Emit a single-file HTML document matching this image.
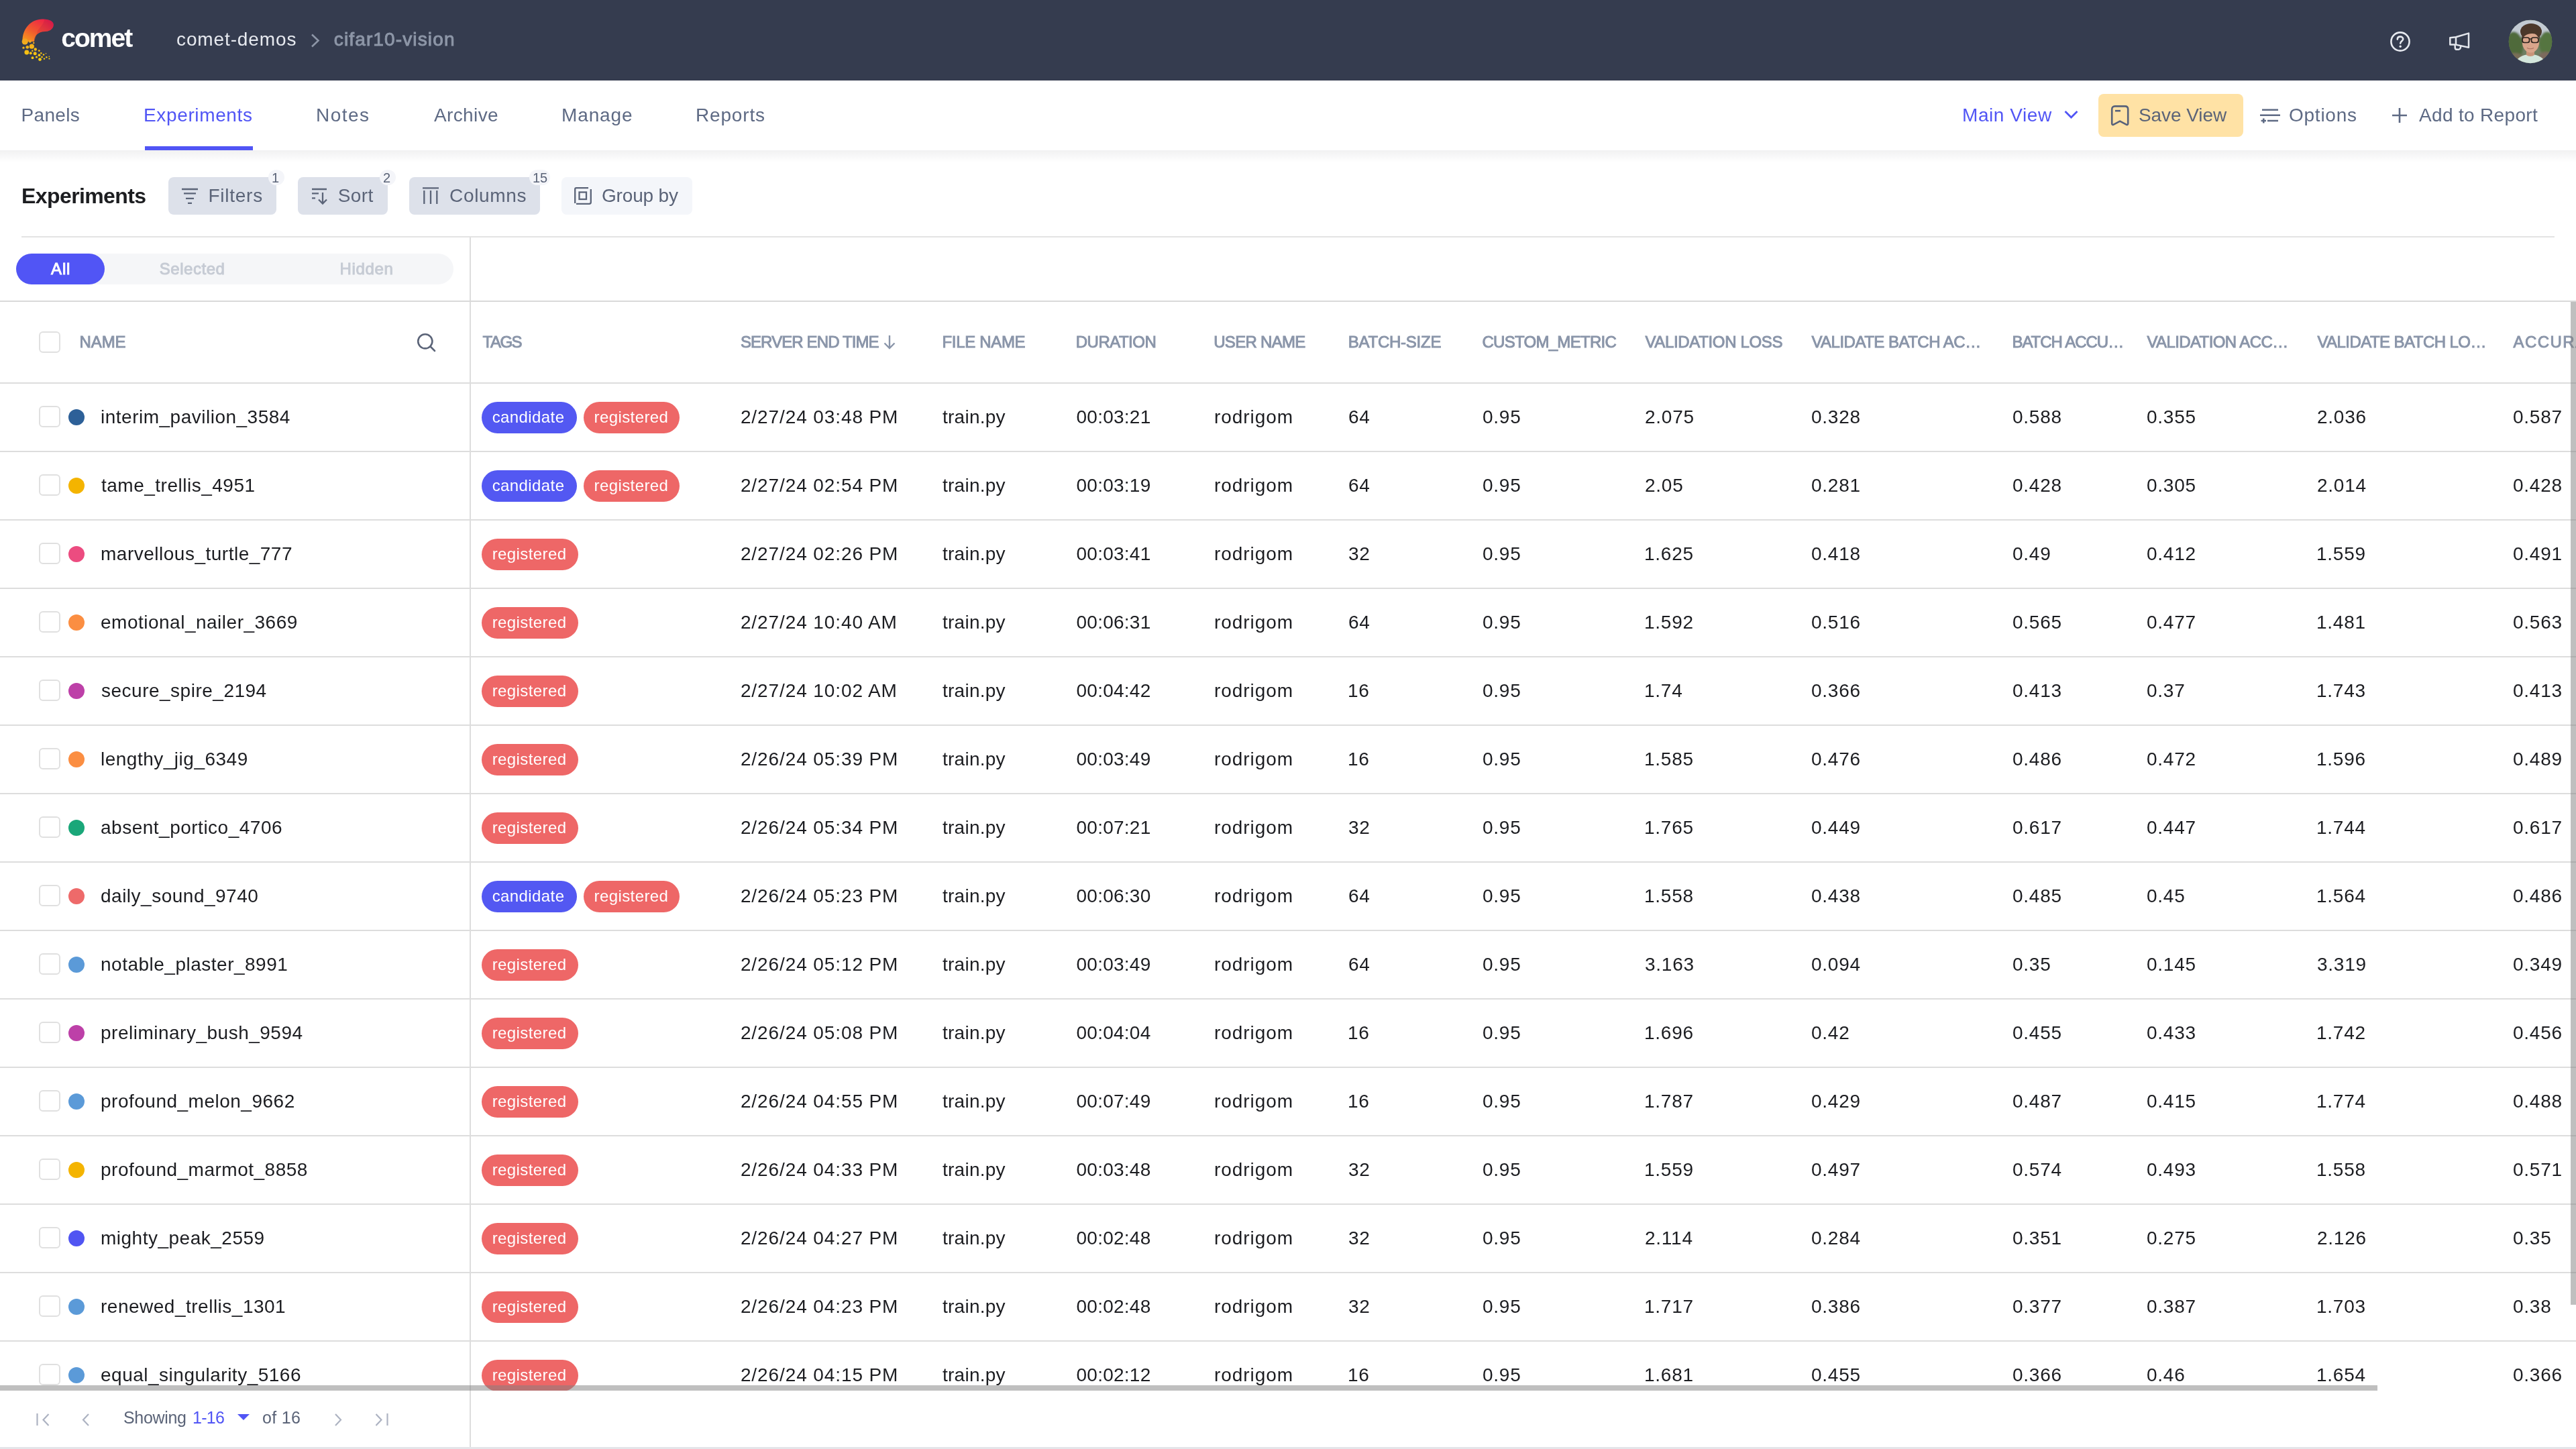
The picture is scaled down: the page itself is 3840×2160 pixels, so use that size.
<!DOCTYPE html>
<html><head><meta charset="utf-8">
<style>
*{margin:0;padding:0;box-sizing:border-box}
html,body{width:3840px;height:2160px;overflow:hidden;background:#fff;font-family:"Liberation Sans",sans-serif}
.t{position:absolute;white-space:pre;line-height:1;font-family:"Liberation Sans",sans-serif}
.a{position:absolute}
#nav{position:absolute;left:0;top:0;width:3840px;height:120px;background:#353c4f}
#tabs{position:absolute;left:0;top:120px;width:3840px;height:104px;background:#fff}
#shadow{position:absolute;left:0;top:224px;width:3840px;height:18px;background:linear-gradient(#f1f1f2,#ffffff)}
.btn{position:absolute;top:264px;height:56px;border-radius:8px;background:#dde1ea}
.badge{position:absolute;top:253px;height:23px;border-radius:12px;background:#f4f5f9}
.cb{position:absolute;width:32px;height:32px;border:2px solid #e0e0e0;border-radius:6px;background:#fff}
.dot{position:absolute;width:24px;height:24px;border-radius:50%}
.tag{position:absolute;height:47px;border-radius:24px}
.tag.c{background:#5358f2}
.tag.r{background:#ee6767}
.hl{position:absolute;left:0;width:3840px;height:2px;background:#dddddd}
svg{position:absolute;overflow:visible}
</style></head><body>
<div id="nav"></div>
<!-- logo -->
<svg style="left:0;top:0" width="220" height="120" viewBox="0 0 220 120">
  <defs>
    <linearGradient id="lg1" x1="0" y1="1" x2="0.8" y2="0">
      <stop offset="0" stop-color="#f7a21b"/><stop offset="0.45" stop-color="#f15a2e"/><stop offset="1" stop-color="#ec1c4a"/>
    </linearGradient>
    <linearGradient id="lgd" gradientUnits="userSpaceOnUse" x1="0" y1="57" x2="0" y2="91">
      <stop offset="0" stop-color="#f0a323"/><stop offset="1" stop-color="#fbd20a"/>
    </linearGradient>
    <linearGradient id="lg2" x1="0" y1="1" x2="1" y2="0">
      <stop offset="0" stop-color="#e94b2f"/><stop offset="1" stop-color="#c0134a"/>
    </linearGradient>
  </defs>
  <path d="M33.5 62 C33 42 47 28 64 28.5 C72 28.8 80 31 79.8 37 C79.6 44 72 47 67 47 C56 47 51 54 51 62 Z" fill="url(#lg1)"/>
  <path d="M51 62 C51 54 56 47 67 47 C72 47 79.6 44 79.8 37 C80 31 72 28.8 64 28.5 C70 30 60 40 56 46 Z" fill="url(#lg2)" opacity="0.55"/>
  <g fill="url(#lgd)">
    <circle cx="37.2" cy="62" r="4.6"/><circle cx="44.8" cy="61.8" r="2"/><circle cx="50.2" cy="64" r="1.3"/>
    <circle cx="47.3" cy="69.2" r="3.6"/><circle cx="40.8" cy="70.3" r="2.4"/><circle cx="35" cy="71.2" r="1.6"/>
    <circle cx="52.8" cy="73.5" r="2.2"/><circle cx="48.3" cy="75.8" r="1.2"/><circle cx="39.8" cy="78" r="3.4"/>
    <circle cx="45.7" cy="79.2" r="2"/><circle cx="52.2" cy="79.8" r="2.5"/><circle cx="58.3" cy="75.6" r="1.4"/>
    <circle cx="61.3" cy="79.3" r="1.2"/><circle cx="58.5" cy="82.2" r="1.9"/><circle cx="65" cy="81.5" r="1.3"/>
    <circle cx="68.5" cy="79.8" r="0.8"/><circle cx="48.5" cy="86.2" r="1.9"/><circle cx="54.5" cy="85" r="1.6"/>
    <circle cx="62.5" cy="85" r="1.3"/><circle cx="59.5" cy="88.6" r="2.4"/><circle cx="66" cy="87.6" r="1.2"/>
    <circle cx="69.3" cy="85.3" r="1.2"/><circle cx="73.3" cy="84.4" r="0.8"/><circle cx="73.5" cy="87.5" r="1.1"/>
  </g>
</svg>
<!-- breadcrumb chevron -->
<svg style="left:462px;top:50px" width="16" height="22" viewBox="0 0 16 22"><path d="M3 1.5 L12.5 10.5 L3 19.5" fill="none" stroke="#8d96a7" stroke-width="2.6"/></svg>
<!-- help icon -->
<svg style="left:3562px;top:46px" width="32" height="32" viewBox="0 0 32 32">
  <circle cx="16" cy="16" r="13.6" fill="none" stroke="#e6e9ef" stroke-width="2.6"/>
  <path d="M11.8 12.6 C11.8 10 13.6 8.6 16 8.6 C18.5 8.6 20.2 10.2 20.2 12.3 C20.2 15.2 16.2 15.4 16.2 18.6" fill="none" stroke="#e6e9ef" stroke-width="2.6" stroke-linecap="round"/>
  <circle cx="16.2" cy="23.2" r="1.7" fill="#e6e9ef"/>
</svg>
<!-- megaphone -->
<svg style="left:3650px;top:47px" width="34" height="30" viewBox="0 0 34 30">
  <path d="M2.3 9.2 L11 8.2 L30 2.6 L30 23.8 L11 19.6 L2.3 19.4 Z" fill="none" stroke="#e3e6ec" stroke-width="2.5" stroke-linejoin="round"/>
  <path d="M11 8.4 L11 19.4" stroke="#e3e6ec" stroke-width="2.5"/>
  <path d="M9.6 20.2 L9.8 24.6 C9.9 26.2 11 26.8 12.6 26.8 L15.2 26.8 C16.4 26.8 17 26.2 17.6 24.8 L18.4 21.6" fill="none" stroke="#e3e6ec" stroke-width="2.5" stroke-linejoin="round" stroke-linecap="round"/>
</svg>
<!-- avatar -->
<svg style="left:3739px;top:29px" width="66" height="66" viewBox="0 0 66 66">
  <defs><clipPath id="av"><circle cx="33" cy="33" r="32.3"/></clipPath>
  <filter id="bl" x="-20%" y="-20%" width="140%" height="140%"><feGaussianBlur stdDeviation="1.6"/></filter>
  <filter id="bl2"><feGaussianBlur stdDeviation="0.6"/></filter></defs>
  <g clip-path="url(#av)">
    <rect width="66" height="66" fill="#6f7f63"/>
    <g filter="url(#bl)">
      <rect x="0" y="0" width="66" height="26" fill="#c3cbd3"/>
      <ellipse cx="8" cy="40" rx="14" ry="22" fill="#4f6a3b"/>
      <ellipse cx="58" cy="36" rx="12" ry="18" fill="#557441"/>
      <ellipse cx="10" cy="60" rx="14" ry="10" fill="#7a6e58"/>
      <ellipse cx="56" cy="58" rx="12" ry="10" fill="#7c6a5d"/>
    </g>
    <g filter="url(#bl2)">
    <path d="M10 68 C12 57 21 52 33 52 C45 52 54 57 56 68 Z" fill="#d4e6dc"/>
    <path d="M27 44 L27 53 C30 55.5 36 55.5 39 53 L39 44 Z" fill="#c99479"/>
    <ellipse cx="34" cy="18" rx="16" ry="12" fill="#4b372a"/>
    <ellipse cx="33.5" cy="34" rx="12.6" ry="15.5" fill="#d9a58b"/>
    <path d="M20.5 30 C19.5 20 24 13 32 12.5 C40 12 46 16 47 24 L46.8 30 C45 24 41 20.5 35 21 C28 21.5 23 24 20.5 30 Z" fill="#4b372a"/>
    <rect x="21" y="27" width="10.5" height="7.5" rx="3" fill="none" stroke="#2a221e" stroke-width="1.7"/>
    <rect x="34.5" y="27" width="10.5" height="7.5" rx="3" fill="none" stroke="#2a221e" stroke-width="1.7"/>
    <path d="M31.5 29 L34.5 29" stroke="#2a221e" stroke-width="1.3"/>
    <path d="M28 42.5 C31 44 35 44 38 42.5" stroke="#a8705e" stroke-width="1.2" fill="none"/>
    </g>
  </g>
</svg>

<div id="tabs"></div>
<div class="a" style="left:216px;top:218px;width:161px;height:6px;background:#5155f5"></div>
<div id="shadow"></div>

<!-- Main view chevron -->
<svg style="left:3076px;top:163px" width="24" height="16" viewBox="0 0 24 16"><path d="M2.5 3 L11.5 12 L20.5 3" fill="none" stroke="#5155f5" stroke-width="2.8"/></svg>
<!-- Save view button -->
<div class="a" style="left:3128px;top:140px;width:216px;height:64px;border-radius:8px;background:#ffe2a5"></div>
<svg style="left:3144px;top:155px" width="32" height="34" viewBox="0 0 32 34">
  <path d="M4.2 29 L4.2 8 C4.2 5 5.8 3.4 8.6 3.4 L23.8 3.4 C26.6 3.4 28.2 5 28.2 8 L28.2 29 C28.2 30.8 27 31.4 25.6 30.6 L16.2 25.6 L6.8 30.6 C5.4 31.4 4.2 30.8 4.2 29 Z" fill="none" stroke="#57617a" stroke-width="2.6" stroke-linejoin="round"/>
  <path d="M9 10.2 L17 10.2" stroke="#57617a" stroke-width="2.6"/>
</svg>
<!-- options icon -->
<svg style="left:3368px;top:158px" width="32" height="30" viewBox="0 0 32 30">
  <path d="M4 5.8 L28 5.8 M1 13.8 L31 13.8 M12 22 L28 22" stroke="#5e6a84" stroke-width="2.6" fill="none"/>
  <path d="M2.6 22 L10 22 M6.3 18.4 L6.3 25.6" stroke="#5e6a84" stroke-width="2.6" fill="none"/>
</svg>
<!-- plus -->
<svg style="left:3565px;top:160px" width="24" height="24" viewBox="0 0 24 24"><path d="M12 1 L12 23 M1 12 L23 12" stroke="#5e6a84" stroke-width="2.6"/></svg>

<!-- toolbar buttons -->
<div class="btn" style="left:251px;width:161px"></div>
<div class="btn" style="left:444px;width:134px"></div>
<div class="btn" style="left:610px;width:195px"></div>
<div class="btn" style="left:837px;width:195px;background:#f4f6fa"></div>
<div class="badge" style="left:400px;width:24px"></div>
<div class="badge" style="left:566px;width:24px"></div>
<div class="badge" style="left:789px;width:31px"></div>
<!-- filter icon -->
<svg style="left:270px;top:278px" width="26" height="28" viewBox="0 0 26 28">
  <path d="M1 4 L25 4 M4 10.4 L22 10.4 M7 17.8 L19 17.8 M10 24.8 L16 24.8" stroke="#5b6478" stroke-width="2.3"/>
</svg>
<!-- sort icon -->
<svg style="left:464px;top:278px" width="24" height="28" viewBox="0 0 24 28">
  <path d="M1 4 L23 4 M1 10.4 L11 10.4 M1 17.4 L6 17.4" stroke="#5b6478" stroke-width="2.3"/>
  <path d="M17 9 L17 25.5 M11 19.5 L17 25.5 L23 19.5" stroke="#5b6478" stroke-width="2.3" fill="none"/>
</svg>
<!-- columns icon -->
<svg style="left:629px;top:279px" width="26" height="26" viewBox="0 0 26 26">
  <path d="M1 1.3 L25 1.3 M3.3 5 L3.3 25 M13 5 L13 25 M22.3 5 L22.3 25" stroke="#5b6478" stroke-width="2.3"/>
</svg>
<!-- group icon -->
<svg style="left:856px;top:279px" width="26" height="26" viewBox="0 0 26 26">
  <path d="M1.2 24 L1.2 3 C1.2 1.8 1.8 1.2 3 1.2 L21 1.2" stroke="#5b6478" stroke-width="2.3" fill="none"/>
  <path d="M3 24.8 L22.5 24.8 C23.7 24.8 24.8 23.7 24.8 22.5 L24.8 3" stroke="#5b6478" stroke-width="2.3" fill="none"/>
  <rect x="7.5" y="7.5" width="10.5" height="10.5" stroke="#5b6478" stroke-width="2.3" fill="none"/>
</svg>

<!-- separators -->
<div class="a" style="left:32px;top:352px;width:3776px;height:2px;background:#e3e3e3"></div>
<div class="a" style="left:700px;top:354px;width:2px;height:1806px;background:#dddddd"></div>
<div class="a" style="left:0;top:448px;width:3840px;height:2px;background:#d9d9d9"></div>
<!-- segmented -->
<div class="a" style="left:24px;top:378px;width:652px;height:46px;border-radius:23px;background:#f5f6f8"></div>
<div class="a" style="left:24px;top:378px;width:132px;height:46px;border-radius:23px;background:#5155f5"></div>

<!-- header -->
<div class="cb" style="left:58px;top:494px"></div>
<svg style="left:621px;top:496px" width="30" height="30" viewBox="0 0 30 30">
  <circle cx="12.8" cy="12.8" r="10.6" fill="none" stroke="#5b6478" stroke-width="2.6"/>
  <path d="M20.5 20.5 L27 27" stroke="#5b6478" stroke-width="2.6" stroke-linecap="round"/>
</svg>
<svg style="left:1316px;top:499px" width="20" height="22" viewBox="0 0 20 22">
  <path d="M10 1 L10 20 M2.5 12.5 L10 20 L17.5 12.5" stroke="#8a95a9" stroke-width="2.4" fill="none"/>
</svg>
<div class="hl" style="top:570px"></div>

<div class="cb" style="left:58px;top:605px"></div>
<div class="dot" style="left:102px;top:610px;background:#2d6098"></div>
<div class="tag c" style="left:718px;top:599px;width:142px"></div>
<div class="tag r" style="left:870px;top:599px;width:143px"></div>
<div class="hl" style="top:672px"></div>
<div class="cb" style="left:58px;top:707px"></div>
<div class="dot" style="left:102px;top:712px;background:#f4b400"></div>
<div class="tag c" style="left:718px;top:701px;width:142px"></div>
<div class="tag r" style="left:870px;top:701px;width:143px"></div>
<div class="hl" style="top:774px"></div>
<div class="cb" style="left:58px;top:809px"></div>
<div class="dot" style="left:102px;top:814px;background:#ec4c80"></div>
<div class="tag r" style="left:718px;top:803px;width:144px"></div>
<div class="hl" style="top:876px"></div>
<div class="cb" style="left:58px;top:911px"></div>
<div class="dot" style="left:102px;top:916px;background:#fb8e42"></div>
<div class="tag r" style="left:718px;top:905px;width:144px"></div>
<div class="hl" style="top:978px"></div>
<div class="cb" style="left:58px;top:1013px"></div>
<div class="dot" style="left:102px;top:1018px;background:#bd40a8"></div>
<div class="tag r" style="left:718px;top:1007px;width:144px"></div>
<div class="hl" style="top:1080px"></div>
<div class="cb" style="left:58px;top:1115px"></div>
<div class="dot" style="left:102px;top:1120px;background:#fb8e42"></div>
<div class="tag r" style="left:718px;top:1109px;width:144px"></div>
<div class="hl" style="top:1182px"></div>
<div class="cb" style="left:58px;top:1217px"></div>
<div class="dot" style="left:102px;top:1222px;background:#1aa779"></div>
<div class="tag r" style="left:718px;top:1211px;width:144px"></div>
<div class="hl" style="top:1284px"></div>
<div class="cb" style="left:58px;top:1319px"></div>
<div class="dot" style="left:102px;top:1324px;background:#ee6a6a"></div>
<div class="tag c" style="left:718px;top:1313px;width:142px"></div>
<div class="tag r" style="left:870px;top:1313px;width:143px"></div>
<div class="hl" style="top:1386px"></div>
<div class="cb" style="left:58px;top:1421px"></div>
<div class="dot" style="left:102px;top:1426px;background:#5b9ad8"></div>
<div class="tag r" style="left:718px;top:1415px;width:144px"></div>
<div class="hl" style="top:1488px"></div>
<div class="cb" style="left:58px;top:1523px"></div>
<div class="dot" style="left:102px;top:1528px;background:#bd40a8"></div>
<div class="tag r" style="left:718px;top:1517px;width:144px"></div>
<div class="hl" style="top:1590px"></div>
<div class="cb" style="left:58px;top:1625px"></div>
<div class="dot" style="left:102px;top:1630px;background:#5b9ad8"></div>
<div class="tag r" style="left:718px;top:1619px;width:144px"></div>
<div class="hl" style="top:1692px"></div>
<div class="cb" style="left:58px;top:1727px"></div>
<div class="dot" style="left:102px;top:1732px;background:#f4b400"></div>
<div class="tag r" style="left:718px;top:1721px;width:144px"></div>
<div class="hl" style="top:1794px"></div>
<div class="cb" style="left:58px;top:1829px"></div>
<div class="dot" style="left:102px;top:1834px;background:#5055f2"></div>
<div class="tag r" style="left:718px;top:1823px;width:144px"></div>
<div class="hl" style="top:1896px"></div>
<div class="cb" style="left:58px;top:1931px"></div>
<div class="dot" style="left:102px;top:1936px;background:#5b9ad8"></div>
<div class="tag r" style="left:718px;top:1925px;width:144px"></div>
<div class="hl" style="top:1998px"></div>
<div class="cb" style="left:58px;top:2033px"></div>
<div class="dot" style="left:102px;top:2038px;background:#5b9ad8"></div>
<div class="tag r" style="left:718px;top:2027px;width:144px"></div>
<div class="hl" style="top:2100px"></div>

<div style="position:absolute;left:0;top:0;width:3840px;height:2160px;will-change:transform">
<div class="t" style="left:91.2px;top:37.49px;font-size:39px;font-weight:700;color:#ffffff;letter-spacing:-1.970px">comet</div>
<div class="t" style="left:263.0px;top:45.10px;font-size:28px;font-weight:400;color:#e6e9ef;letter-spacing:0.879px">comet-demos</div>
<div class="t" style="left:497.8px;top:45.10px;font-size:28px;font-weight:400;color:#8d96a7;letter-spacing:1.132px;-webkit-text-stroke:0.95px #8d96a7">cifar10-vision</div>
<div class="t" style="left:31.6px;top:157.60px;font-size:28px;font-weight:400;color:#5e6a84;letter-spacing:0.297px">Panels</div>
<div class="t" style="left:214.0px;top:157.60px;font-size:28px;font-weight:400;color:#5155f5;letter-spacing:0.639px">Experiments</div>
<div class="t" style="left:471.0px;top:157.60px;font-size:28px;font-weight:400;color:#5e6a84;letter-spacing:1.464px">Notes</div>
<div class="t" style="left:647.0px;top:157.60px;font-size:28px;font-weight:400;color:#5e6a84;letter-spacing:0.368px">Archive</div>
<div class="t" style="left:837.0px;top:157.60px;font-size:28px;font-weight:400;color:#5e6a84;letter-spacing:0.877px">Manage</div>
<div class="t" style="left:1037.0px;top:157.60px;font-size:28px;font-weight:400;color:#5e6a84;letter-spacing:0.826px">Reports</div>
<div class="t" style="left:2925.0px;top:157.60px;font-size:28px;font-weight:400;color:#5155f5;letter-spacing:0.571px">Main View</div>
<div class="t" style="left:3188.0px;top:157.60px;font-size:28px;font-weight:400;color:#5b6478;letter-spacing:-0.070px">Save View</div>
<div class="t" style="left:3412.0px;top:157.60px;font-size:28px;font-weight:400;color:#5e6a84;letter-spacing:0.751px">Options</div>
<div class="t" style="left:3606.0px;top:157.60px;font-size:28px;font-weight:400;color:#5e6a84;letter-spacing:0.334px">Add to Report</div>
<div class="t" style="left:32.1px;top:275.81px;font-size:32px;font-weight:700;color:#1c1d20;letter-spacing:-0.608px">Experiments</div>
<div class="t" style="left:310.4px;top:278.30px;font-size:28px;font-weight:400;color:#5b6478;letter-spacing:0.763px">Filters</div>
<div class="t" style="left:503.8px;top:278.30px;font-size:28px;font-weight:400;color:#5b6478;letter-spacing:0.376px">Sort</div>
<div class="t" style="left:670.0px;top:278.30px;font-size:28px;font-weight:400;color:#5b6478;letter-spacing:0.686px">Columns</div>
<div class="t" style="left:897.0px;top:278.30px;font-size:28px;font-weight:400;color:#5b6478;letter-spacing:-0.167px">Group by</div>
<div class="t" style="left:76.0px;top:388.68px;font-size:24px;font-weight:400;color:#ffffff;letter-spacing:0.880px;-webkit-text-stroke:0.95px #ffffff">All</div>
<div class="t" style="left:237.8px;top:388.68px;font-size:24px;font-weight:400;color:#c6cbd4;letter-spacing:0.521px;-webkit-text-stroke:0.95px #c6cbd4">Selected</div>
<div class="t" style="left:506.4px;top:388.68px;font-size:24px;font-weight:400;color:#c6cbd4;letter-spacing:0.679px;-webkit-text-stroke:0.95px #c6cbd4">Hidden</div>
<div class="t" style="left:118.5px;top:497.88px;font-size:24px;font-weight:400;color:#8a95a9;letter-spacing:-0.077px;-webkit-text-stroke:0.95px #8a95a9">NAME</div>
<div class="t" style="left:719.5px;top:497.88px;font-size:24px;font-weight:400;color:#8a95a9;letter-spacing:-1.485px;-webkit-text-stroke:0.95px #8a95a9">TAGS</div>
<div class="t" style="left:1103.9px;top:497.88px;font-size:24px;font-weight:400;color:#8a95a9;letter-spacing:-0.892px;-webkit-text-stroke:0.95px #8a95a9">SERVER END TIME</div>
<div class="t" style="left:1404.5px;top:497.88px;font-size:24px;font-weight:400;color:#8a95a9;letter-spacing:-0.323px;-webkit-text-stroke:0.95px #8a95a9">FILE NAME</div>
<div class="t" style="left:1603.8px;top:497.88px;font-size:24px;font-weight:400;color:#8a95a9;letter-spacing:-0.517px;-webkit-text-stroke:0.95px #8a95a9">DURATION</div>
<div class="t" style="left:1809.2px;top:497.88px;font-size:24px;font-weight:400;color:#8a95a9;letter-spacing:-0.697px;-webkit-text-stroke:0.95px #8a95a9">USER NAME</div>
<div class="t" style="left:2009.8px;top:497.88px;font-size:24px;font-weight:400;color:#8a95a9;letter-spacing:-0.254px;-webkit-text-stroke:0.95px #8a95a9">BATCH-SIZE</div>
<div class="t" style="left:2209.4px;top:497.88px;font-size:24px;font-weight:400;color:#8a95a9;letter-spacing:-0.706px;-webkit-text-stroke:0.95px #8a95a9">CUSTOM_METRIC</div>
<div class="t" style="left:2452.4px;top:497.88px;font-size:24px;font-weight:400;color:#8a95a9;letter-spacing:-0.338px;-webkit-text-stroke:0.95px #8a95a9">VALIDATION LOSS</div>
<div class="t" style="left:2700.4px;top:497.88px;font-size:24px;font-weight:400;color:#8a95a9;letter-spacing:-0.507px;-webkit-text-stroke:0.95px #8a95a9">VALIDATE BATCH AC…</div>
<div class="t" style="left:2999.4px;top:497.88px;font-size:24px;font-weight:400;color:#8a95a9;letter-spacing:-1.013px;-webkit-text-stroke:0.95px #8a95a9">BATCH ACCU…</div>
<div class="t" style="left:3200.4px;top:497.88px;font-size:24px;font-weight:400;color:#8a95a9;letter-spacing:-0.598px;-webkit-text-stroke:0.95px #8a95a9">VALIDATION ACC…</div>
<div class="t" style="left:3454.4px;top:497.88px;font-size:24px;font-weight:400;color:#8a95a9;letter-spacing:-0.546px;-webkit-text-stroke:0.95px #8a95a9">VALIDATE BATCH LO…</div>
<div class="t" style="left:3746.4px;top:497.88px;font-size:24px;font-weight:400;color:#8a95a9;letter-spacing:1.489px;-webkit-text-stroke:0.95px #8a95a9">ACCURACY</div>
<div class="t" style="left:150.0px;top:607.80px;font-size:28px;font-weight:400;color:#1c1d21;letter-spacing:0.500px">interim_pavilion_3584</div>
<div class="t" style="left:1103.9px;top:607.80px;font-size:28px;font-weight:400;color:#1c1d21;letter-spacing:0.900px">2/27/24 03:48 PM</div>
<div class="t" style="left:1405.0px;top:607.80px;font-size:28px;font-weight:400;color:#1c1d21;letter-spacing:0.250px">train.py</div>
<div class="t" style="left:1604.5px;top:607.80px;font-size:28px;font-weight:400;color:#1c1d21;letter-spacing:0.250px">00:03:21</div>
<div class="t" style="left:1810.0px;top:607.80px;font-size:28px;font-weight:400;color:#1c1d21;letter-spacing:0.950px">rodrigom</div>
<div class="t" style="left:2010.0px;top:607.80px;font-size:28px;font-weight:400;color:#1c1d21;letter-spacing:0.750px">64</div>
<div class="t" style="left:2210.0px;top:607.80px;font-size:28px;font-weight:400;color:#1c1d21;letter-spacing:0.750px">0.95</div>
<div class="t" style="left:2452.0px;top:607.80px;font-size:28px;font-weight:400;color:#1c1d21;letter-spacing:0.750px">2.075</div>
<div class="t" style="left:2700.0px;top:607.80px;font-size:28px;font-weight:400;color:#1c1d21;letter-spacing:0.750px">0.328</div>
<div class="t" style="left:3000.0px;top:607.80px;font-size:28px;font-weight:400;color:#1c1d21;letter-spacing:0.750px">0.588</div>
<div class="t" style="left:3200.0px;top:607.80px;font-size:28px;font-weight:400;color:#1c1d21;letter-spacing:0.750px">0.355</div>
<div class="t" style="left:3454.0px;top:607.80px;font-size:28px;font-weight:400;color:#1c1d21;letter-spacing:0.750px">2.036</div>
<div class="t" style="left:3746.0px;top:607.80px;font-size:28px;font-weight:400;color:#1c1d21;letter-spacing:0.750px">0.587</div>
<div class="t" style="left:733.7px;top:609.68px;font-size:24px;font-weight:400;color:#fff;letter-spacing:0.400px">candidate</div>
<div class="t" style="left:885.6px;top:609.68px;font-size:24px;font-weight:400;color:#fff;letter-spacing:0.400px">registered</div>
<div class="t" style="left:151.0px;top:709.80px;font-size:28px;font-weight:400;color:#1c1d21;letter-spacing:0.500px">tame_trellis_4951</div>
<div class="t" style="left:1103.9px;top:709.80px;font-size:28px;font-weight:400;color:#1c1d21;letter-spacing:0.900px">2/27/24 02:54 PM</div>
<div class="t" style="left:1405.0px;top:709.80px;font-size:28px;font-weight:400;color:#1c1d21;letter-spacing:0.250px">train.py</div>
<div class="t" style="left:1604.5px;top:709.80px;font-size:28px;font-weight:400;color:#1c1d21;letter-spacing:0.250px">00:03:19</div>
<div class="t" style="left:1810.0px;top:709.80px;font-size:28px;font-weight:400;color:#1c1d21;letter-spacing:0.950px">rodrigom</div>
<div class="t" style="left:2010.0px;top:709.80px;font-size:28px;font-weight:400;color:#1c1d21;letter-spacing:0.750px">64</div>
<div class="t" style="left:2210.0px;top:709.80px;font-size:28px;font-weight:400;color:#1c1d21;letter-spacing:0.750px">0.95</div>
<div class="t" style="left:2452.0px;top:709.80px;font-size:28px;font-weight:400;color:#1c1d21;letter-spacing:0.750px">2.05</div>
<div class="t" style="left:2700.0px;top:709.80px;font-size:28px;font-weight:400;color:#1c1d21;letter-spacing:0.750px">0.281</div>
<div class="t" style="left:3000.0px;top:709.80px;font-size:28px;font-weight:400;color:#1c1d21;letter-spacing:0.750px">0.428</div>
<div class="t" style="left:3200.0px;top:709.80px;font-size:28px;font-weight:400;color:#1c1d21;letter-spacing:0.750px">0.305</div>
<div class="t" style="left:3454.0px;top:709.80px;font-size:28px;font-weight:400;color:#1c1d21;letter-spacing:0.750px">2.014</div>
<div class="t" style="left:3746.0px;top:709.80px;font-size:28px;font-weight:400;color:#1c1d21;letter-spacing:0.750px">0.428</div>
<div class="t" style="left:733.7px;top:711.68px;font-size:24px;font-weight:400;color:#fff;letter-spacing:0.400px">candidate</div>
<div class="t" style="left:885.6px;top:711.68px;font-size:24px;font-weight:400;color:#fff;letter-spacing:0.400px">registered</div>
<div class="t" style="left:150.0px;top:811.80px;font-size:28px;font-weight:400;color:#1c1d21;letter-spacing:0.500px">marvellous_turtle_777</div>
<div class="t" style="left:1103.9px;top:811.80px;font-size:28px;font-weight:400;color:#1c1d21;letter-spacing:0.900px">2/27/24 02:26 PM</div>
<div class="t" style="left:1405.0px;top:811.80px;font-size:28px;font-weight:400;color:#1c1d21;letter-spacing:0.250px">train.py</div>
<div class="t" style="left:1604.5px;top:811.80px;font-size:28px;font-weight:400;color:#1c1d21;letter-spacing:0.250px">00:03:41</div>
<div class="t" style="left:1810.0px;top:811.80px;font-size:28px;font-weight:400;color:#1c1d21;letter-spacing:0.950px">rodrigom</div>
<div class="t" style="left:2010.0px;top:811.80px;font-size:28px;font-weight:400;color:#1c1d21;letter-spacing:0.750px">32</div>
<div class="t" style="left:2210.0px;top:811.80px;font-size:28px;font-weight:400;color:#1c1d21;letter-spacing:0.750px">0.95</div>
<div class="t" style="left:2451.0px;top:811.80px;font-size:28px;font-weight:400;color:#1c1d21;letter-spacing:0.750px">1.625</div>
<div class="t" style="left:2700.0px;top:811.80px;font-size:28px;font-weight:400;color:#1c1d21;letter-spacing:0.750px">0.418</div>
<div class="t" style="left:3000.0px;top:811.80px;font-size:28px;font-weight:400;color:#1c1d21;letter-spacing:0.750px">0.49</div>
<div class="t" style="left:3200.0px;top:811.80px;font-size:28px;font-weight:400;color:#1c1d21;letter-spacing:0.750px">0.412</div>
<div class="t" style="left:3453.0px;top:811.80px;font-size:28px;font-weight:400;color:#1c1d21;letter-spacing:0.750px">1.559</div>
<div class="t" style="left:3746.0px;top:811.80px;font-size:28px;font-weight:400;color:#1c1d21;letter-spacing:0.750px">0.491</div>
<div class="t" style="left:733.7px;top:813.68px;font-size:24px;font-weight:400;color:#fff;letter-spacing:0.400px">registered</div>
<div class="t" style="left:150.0px;top:913.80px;font-size:28px;font-weight:400;color:#1c1d21;letter-spacing:0.500px">emotional_nailer_3669</div>
<div class="t" style="left:1103.9px;top:913.80px;font-size:28px;font-weight:400;color:#1c1d21;letter-spacing:0.900px">2/27/24 10:40 AM</div>
<div class="t" style="left:1405.0px;top:913.80px;font-size:28px;font-weight:400;color:#1c1d21;letter-spacing:0.250px">train.py</div>
<div class="t" style="left:1604.5px;top:913.80px;font-size:28px;font-weight:400;color:#1c1d21;letter-spacing:0.250px">00:06:31</div>
<div class="t" style="left:1810.0px;top:913.80px;font-size:28px;font-weight:400;color:#1c1d21;letter-spacing:0.950px">rodrigom</div>
<div class="t" style="left:2010.0px;top:913.80px;font-size:28px;font-weight:400;color:#1c1d21;letter-spacing:0.750px">64</div>
<div class="t" style="left:2210.0px;top:913.80px;font-size:28px;font-weight:400;color:#1c1d21;letter-spacing:0.750px">0.95</div>
<div class="t" style="left:2451.0px;top:913.80px;font-size:28px;font-weight:400;color:#1c1d21;letter-spacing:0.750px">1.592</div>
<div class="t" style="left:2700.0px;top:913.80px;font-size:28px;font-weight:400;color:#1c1d21;letter-spacing:0.750px">0.516</div>
<div class="t" style="left:3000.0px;top:913.80px;font-size:28px;font-weight:400;color:#1c1d21;letter-spacing:0.750px">0.565</div>
<div class="t" style="left:3200.0px;top:913.80px;font-size:28px;font-weight:400;color:#1c1d21;letter-spacing:0.750px">0.477</div>
<div class="t" style="left:3453.0px;top:913.80px;font-size:28px;font-weight:400;color:#1c1d21;letter-spacing:0.750px">1.481</div>
<div class="t" style="left:3746.0px;top:913.80px;font-size:28px;font-weight:400;color:#1c1d21;letter-spacing:0.750px">0.563</div>
<div class="t" style="left:733.7px;top:915.68px;font-size:24px;font-weight:400;color:#fff;letter-spacing:0.400px">registered</div>
<div class="t" style="left:151.0px;top:1015.80px;font-size:28px;font-weight:400;color:#1c1d21;letter-spacing:0.500px">secure_spire_2194</div>
<div class="t" style="left:1103.9px;top:1015.80px;font-size:28px;font-weight:400;color:#1c1d21;letter-spacing:0.900px">2/27/24 10:02 AM</div>
<div class="t" style="left:1405.0px;top:1015.80px;font-size:28px;font-weight:400;color:#1c1d21;letter-spacing:0.250px">train.py</div>
<div class="t" style="left:1604.5px;top:1015.80px;font-size:28px;font-weight:400;color:#1c1d21;letter-spacing:0.250px">00:04:42</div>
<div class="t" style="left:1810.0px;top:1015.80px;font-size:28px;font-weight:400;color:#1c1d21;letter-spacing:0.950px">rodrigom</div>
<div class="t" style="left:2009.0px;top:1015.80px;font-size:28px;font-weight:400;color:#1c1d21;letter-spacing:0.750px">16</div>
<div class="t" style="left:2210.0px;top:1015.80px;font-size:28px;font-weight:400;color:#1c1d21;letter-spacing:0.750px">0.95</div>
<div class="t" style="left:2451.0px;top:1015.80px;font-size:28px;font-weight:400;color:#1c1d21;letter-spacing:0.750px">1.74</div>
<div class="t" style="left:2700.0px;top:1015.80px;font-size:28px;font-weight:400;color:#1c1d21;letter-spacing:0.750px">0.366</div>
<div class="t" style="left:3000.0px;top:1015.80px;font-size:28px;font-weight:400;color:#1c1d21;letter-spacing:0.750px">0.413</div>
<div class="t" style="left:3200.0px;top:1015.80px;font-size:28px;font-weight:400;color:#1c1d21;letter-spacing:0.750px">0.37</div>
<div class="t" style="left:3453.0px;top:1015.80px;font-size:28px;font-weight:400;color:#1c1d21;letter-spacing:0.750px">1.743</div>
<div class="t" style="left:3746.0px;top:1015.80px;font-size:28px;font-weight:400;color:#1c1d21;letter-spacing:0.750px">0.413</div>
<div class="t" style="left:733.7px;top:1017.68px;font-size:24px;font-weight:400;color:#fff;letter-spacing:0.400px">registered</div>
<div class="t" style="left:150.0px;top:1117.80px;font-size:28px;font-weight:400;color:#1c1d21;letter-spacing:0.500px">lengthy_jig_6349</div>
<div class="t" style="left:1103.9px;top:1117.80px;font-size:28px;font-weight:400;color:#1c1d21;letter-spacing:0.900px">2/26/24 05:39 PM</div>
<div class="t" style="left:1405.0px;top:1117.80px;font-size:28px;font-weight:400;color:#1c1d21;letter-spacing:0.250px">train.py</div>
<div class="t" style="left:1604.5px;top:1117.80px;font-size:28px;font-weight:400;color:#1c1d21;letter-spacing:0.250px">00:03:49</div>
<div class="t" style="left:1810.0px;top:1117.80px;font-size:28px;font-weight:400;color:#1c1d21;letter-spacing:0.950px">rodrigom</div>
<div class="t" style="left:2009.0px;top:1117.80px;font-size:28px;font-weight:400;color:#1c1d21;letter-spacing:0.750px">16</div>
<div class="t" style="left:2210.0px;top:1117.80px;font-size:28px;font-weight:400;color:#1c1d21;letter-spacing:0.750px">0.95</div>
<div class="t" style="left:2451.0px;top:1117.80px;font-size:28px;font-weight:400;color:#1c1d21;letter-spacing:0.750px">1.585</div>
<div class="t" style="left:2700.0px;top:1117.80px;font-size:28px;font-weight:400;color:#1c1d21;letter-spacing:0.750px">0.476</div>
<div class="t" style="left:3000.0px;top:1117.80px;font-size:28px;font-weight:400;color:#1c1d21;letter-spacing:0.750px">0.486</div>
<div class="t" style="left:3200.0px;top:1117.80px;font-size:28px;font-weight:400;color:#1c1d21;letter-spacing:0.750px">0.472</div>
<div class="t" style="left:3453.0px;top:1117.80px;font-size:28px;font-weight:400;color:#1c1d21;letter-spacing:0.750px">1.596</div>
<div class="t" style="left:3746.0px;top:1117.80px;font-size:28px;font-weight:400;color:#1c1d21;letter-spacing:0.750px">0.489</div>
<div class="t" style="left:733.7px;top:1119.68px;font-size:24px;font-weight:400;color:#fff;letter-spacing:0.400px">registered</div>
<div class="t" style="left:150.0px;top:1219.80px;font-size:28px;font-weight:400;color:#1c1d21;letter-spacing:0.500px">absent_portico_4706</div>
<div class="t" style="left:1103.9px;top:1219.80px;font-size:28px;font-weight:400;color:#1c1d21;letter-spacing:0.900px">2/26/24 05:34 PM</div>
<div class="t" style="left:1405.0px;top:1219.80px;font-size:28px;font-weight:400;color:#1c1d21;letter-spacing:0.250px">train.py</div>
<div class="t" style="left:1604.5px;top:1219.80px;font-size:28px;font-weight:400;color:#1c1d21;letter-spacing:0.250px">00:07:21</div>
<div class="t" style="left:1810.0px;top:1219.80px;font-size:28px;font-weight:400;color:#1c1d21;letter-spacing:0.950px">rodrigom</div>
<div class="t" style="left:2010.0px;top:1219.80px;font-size:28px;font-weight:400;color:#1c1d21;letter-spacing:0.750px">32</div>
<div class="t" style="left:2210.0px;top:1219.80px;font-size:28px;font-weight:400;color:#1c1d21;letter-spacing:0.750px">0.95</div>
<div class="t" style="left:2451.0px;top:1219.80px;font-size:28px;font-weight:400;color:#1c1d21;letter-spacing:0.750px">1.765</div>
<div class="t" style="left:2700.0px;top:1219.80px;font-size:28px;font-weight:400;color:#1c1d21;letter-spacing:0.750px">0.449</div>
<div class="t" style="left:3000.0px;top:1219.80px;font-size:28px;font-weight:400;color:#1c1d21;letter-spacing:0.750px">0.617</div>
<div class="t" style="left:3200.0px;top:1219.80px;font-size:28px;font-weight:400;color:#1c1d21;letter-spacing:0.750px">0.447</div>
<div class="t" style="left:3453.0px;top:1219.80px;font-size:28px;font-weight:400;color:#1c1d21;letter-spacing:0.750px">1.744</div>
<div class="t" style="left:3746.0px;top:1219.80px;font-size:28px;font-weight:400;color:#1c1d21;letter-spacing:0.750px">0.617</div>
<div class="t" style="left:733.7px;top:1221.68px;font-size:24px;font-weight:400;color:#fff;letter-spacing:0.400px">registered</div>
<div class="t" style="left:150.0px;top:1321.80px;font-size:28px;font-weight:400;color:#1c1d21;letter-spacing:0.500px">daily_sound_9740</div>
<div class="t" style="left:1103.9px;top:1321.80px;font-size:28px;font-weight:400;color:#1c1d21;letter-spacing:0.900px">2/26/24 05:23 PM</div>
<div class="t" style="left:1405.0px;top:1321.80px;font-size:28px;font-weight:400;color:#1c1d21;letter-spacing:0.250px">train.py</div>
<div class="t" style="left:1604.5px;top:1321.80px;font-size:28px;font-weight:400;color:#1c1d21;letter-spacing:0.250px">00:06:30</div>
<div class="t" style="left:1810.0px;top:1321.80px;font-size:28px;font-weight:400;color:#1c1d21;letter-spacing:0.950px">rodrigom</div>
<div class="t" style="left:2010.0px;top:1321.80px;font-size:28px;font-weight:400;color:#1c1d21;letter-spacing:0.750px">64</div>
<div class="t" style="left:2210.0px;top:1321.80px;font-size:28px;font-weight:400;color:#1c1d21;letter-spacing:0.750px">0.95</div>
<div class="t" style="left:2451.0px;top:1321.80px;font-size:28px;font-weight:400;color:#1c1d21;letter-spacing:0.750px">1.558</div>
<div class="t" style="left:2700.0px;top:1321.80px;font-size:28px;font-weight:400;color:#1c1d21;letter-spacing:0.750px">0.438</div>
<div class="t" style="left:3000.0px;top:1321.80px;font-size:28px;font-weight:400;color:#1c1d21;letter-spacing:0.750px">0.485</div>
<div class="t" style="left:3200.0px;top:1321.80px;font-size:28px;font-weight:400;color:#1c1d21;letter-spacing:0.750px">0.45</div>
<div class="t" style="left:3453.0px;top:1321.80px;font-size:28px;font-weight:400;color:#1c1d21;letter-spacing:0.750px">1.564</div>
<div class="t" style="left:3746.0px;top:1321.80px;font-size:28px;font-weight:400;color:#1c1d21;letter-spacing:0.750px">0.486</div>
<div class="t" style="left:733.7px;top:1323.68px;font-size:24px;font-weight:400;color:#fff;letter-spacing:0.400px">candidate</div>
<div class="t" style="left:885.6px;top:1323.68px;font-size:24px;font-weight:400;color:#fff;letter-spacing:0.400px">registered</div>
<div class="t" style="left:150.0px;top:1423.80px;font-size:28px;font-weight:400;color:#1c1d21;letter-spacing:0.500px">notable_plaster_8991</div>
<div class="t" style="left:1103.9px;top:1423.80px;font-size:28px;font-weight:400;color:#1c1d21;letter-spacing:0.900px">2/26/24 05:12 PM</div>
<div class="t" style="left:1405.0px;top:1423.80px;font-size:28px;font-weight:400;color:#1c1d21;letter-spacing:0.250px">train.py</div>
<div class="t" style="left:1604.5px;top:1423.80px;font-size:28px;font-weight:400;color:#1c1d21;letter-spacing:0.250px">00:03:49</div>
<div class="t" style="left:1810.0px;top:1423.80px;font-size:28px;font-weight:400;color:#1c1d21;letter-spacing:0.950px">rodrigom</div>
<div class="t" style="left:2010.0px;top:1423.80px;font-size:28px;font-weight:400;color:#1c1d21;letter-spacing:0.750px">64</div>
<div class="t" style="left:2210.0px;top:1423.80px;font-size:28px;font-weight:400;color:#1c1d21;letter-spacing:0.750px">0.95</div>
<div class="t" style="left:2452.0px;top:1423.80px;font-size:28px;font-weight:400;color:#1c1d21;letter-spacing:0.750px">3.163</div>
<div class="t" style="left:2700.0px;top:1423.80px;font-size:28px;font-weight:400;color:#1c1d21;letter-spacing:0.750px">0.094</div>
<div class="t" style="left:3000.0px;top:1423.80px;font-size:28px;font-weight:400;color:#1c1d21;letter-spacing:0.750px">0.35</div>
<div class="t" style="left:3200.0px;top:1423.80px;font-size:28px;font-weight:400;color:#1c1d21;letter-spacing:0.750px">0.145</div>
<div class="t" style="left:3454.0px;top:1423.80px;font-size:28px;font-weight:400;color:#1c1d21;letter-spacing:0.750px">3.319</div>
<div class="t" style="left:3746.0px;top:1423.80px;font-size:28px;font-weight:400;color:#1c1d21;letter-spacing:0.750px">0.349</div>
<div class="t" style="left:733.7px;top:1425.68px;font-size:24px;font-weight:400;color:#fff;letter-spacing:0.400px">registered</div>
<div class="t" style="left:150.0px;top:1525.80px;font-size:28px;font-weight:400;color:#1c1d21;letter-spacing:0.500px">preliminary_bush_9594</div>
<div class="t" style="left:1103.9px;top:1525.80px;font-size:28px;font-weight:400;color:#1c1d21;letter-spacing:0.900px">2/26/24 05:08 PM</div>
<div class="t" style="left:1405.0px;top:1525.80px;font-size:28px;font-weight:400;color:#1c1d21;letter-spacing:0.250px">train.py</div>
<div class="t" style="left:1604.5px;top:1525.80px;font-size:28px;font-weight:400;color:#1c1d21;letter-spacing:0.250px">00:04:04</div>
<div class="t" style="left:1810.0px;top:1525.80px;font-size:28px;font-weight:400;color:#1c1d21;letter-spacing:0.950px">rodrigom</div>
<div class="t" style="left:2009.0px;top:1525.80px;font-size:28px;font-weight:400;color:#1c1d21;letter-spacing:0.750px">16</div>
<div class="t" style="left:2210.0px;top:1525.80px;font-size:28px;font-weight:400;color:#1c1d21;letter-spacing:0.750px">0.95</div>
<div class="t" style="left:2451.0px;top:1525.80px;font-size:28px;font-weight:400;color:#1c1d21;letter-spacing:0.750px">1.696</div>
<div class="t" style="left:2700.0px;top:1525.80px;font-size:28px;font-weight:400;color:#1c1d21;letter-spacing:0.750px">0.42</div>
<div class="t" style="left:3000.0px;top:1525.80px;font-size:28px;font-weight:400;color:#1c1d21;letter-spacing:0.750px">0.455</div>
<div class="t" style="left:3200.0px;top:1525.80px;font-size:28px;font-weight:400;color:#1c1d21;letter-spacing:0.750px">0.433</div>
<div class="t" style="left:3453.0px;top:1525.80px;font-size:28px;font-weight:400;color:#1c1d21;letter-spacing:0.750px">1.742</div>
<div class="t" style="left:3746.0px;top:1525.80px;font-size:28px;font-weight:400;color:#1c1d21;letter-spacing:0.750px">0.456</div>
<div class="t" style="left:733.7px;top:1527.68px;font-size:24px;font-weight:400;color:#fff;letter-spacing:0.400px">registered</div>
<div class="t" style="left:150.0px;top:1627.80px;font-size:28px;font-weight:400;color:#1c1d21;letter-spacing:0.500px">profound_melon_9662</div>
<div class="t" style="left:1103.9px;top:1627.80px;font-size:28px;font-weight:400;color:#1c1d21;letter-spacing:0.900px">2/26/24 04:55 PM</div>
<div class="t" style="left:1405.0px;top:1627.80px;font-size:28px;font-weight:400;color:#1c1d21;letter-spacing:0.250px">train.py</div>
<div class="t" style="left:1604.5px;top:1627.80px;font-size:28px;font-weight:400;color:#1c1d21;letter-spacing:0.250px">00:07:49</div>
<div class="t" style="left:1810.0px;top:1627.80px;font-size:28px;font-weight:400;color:#1c1d21;letter-spacing:0.950px">rodrigom</div>
<div class="t" style="left:2009.0px;top:1627.80px;font-size:28px;font-weight:400;color:#1c1d21;letter-spacing:0.750px">16</div>
<div class="t" style="left:2210.0px;top:1627.80px;font-size:28px;font-weight:400;color:#1c1d21;letter-spacing:0.750px">0.95</div>
<div class="t" style="left:2451.0px;top:1627.80px;font-size:28px;font-weight:400;color:#1c1d21;letter-spacing:0.750px">1.787</div>
<div class="t" style="left:2700.0px;top:1627.80px;font-size:28px;font-weight:400;color:#1c1d21;letter-spacing:0.750px">0.429</div>
<div class="t" style="left:3000.0px;top:1627.80px;font-size:28px;font-weight:400;color:#1c1d21;letter-spacing:0.750px">0.487</div>
<div class="t" style="left:3200.0px;top:1627.80px;font-size:28px;font-weight:400;color:#1c1d21;letter-spacing:0.750px">0.415</div>
<div class="t" style="left:3453.0px;top:1627.80px;font-size:28px;font-weight:400;color:#1c1d21;letter-spacing:0.750px">1.774</div>
<div class="t" style="left:3746.0px;top:1627.80px;font-size:28px;font-weight:400;color:#1c1d21;letter-spacing:0.750px">0.488</div>
<div class="t" style="left:733.7px;top:1629.68px;font-size:24px;font-weight:400;color:#fff;letter-spacing:0.400px">registered</div>
<div class="t" style="left:150.0px;top:1729.80px;font-size:28px;font-weight:400;color:#1c1d21;letter-spacing:0.500px">profound_marmot_8858</div>
<div class="t" style="left:1103.9px;top:1729.80px;font-size:28px;font-weight:400;color:#1c1d21;letter-spacing:0.900px">2/26/24 04:33 PM</div>
<div class="t" style="left:1405.0px;top:1729.80px;font-size:28px;font-weight:400;color:#1c1d21;letter-spacing:0.250px">train.py</div>
<div class="t" style="left:1604.5px;top:1729.80px;font-size:28px;font-weight:400;color:#1c1d21;letter-spacing:0.250px">00:03:48</div>
<div class="t" style="left:1810.0px;top:1729.80px;font-size:28px;font-weight:400;color:#1c1d21;letter-spacing:0.950px">rodrigom</div>
<div class="t" style="left:2010.0px;top:1729.80px;font-size:28px;font-weight:400;color:#1c1d21;letter-spacing:0.750px">32</div>
<div class="t" style="left:2210.0px;top:1729.80px;font-size:28px;font-weight:400;color:#1c1d21;letter-spacing:0.750px">0.95</div>
<div class="t" style="left:2451.0px;top:1729.80px;font-size:28px;font-weight:400;color:#1c1d21;letter-spacing:0.750px">1.559</div>
<div class="t" style="left:2700.0px;top:1729.80px;font-size:28px;font-weight:400;color:#1c1d21;letter-spacing:0.750px">0.497</div>
<div class="t" style="left:3000.0px;top:1729.80px;font-size:28px;font-weight:400;color:#1c1d21;letter-spacing:0.750px">0.574</div>
<div class="t" style="left:3200.0px;top:1729.80px;font-size:28px;font-weight:400;color:#1c1d21;letter-spacing:0.750px">0.493</div>
<div class="t" style="left:3453.0px;top:1729.80px;font-size:28px;font-weight:400;color:#1c1d21;letter-spacing:0.750px">1.558</div>
<div class="t" style="left:3746.0px;top:1729.80px;font-size:28px;font-weight:400;color:#1c1d21;letter-spacing:0.750px">0.571</div>
<div class="t" style="left:733.7px;top:1731.68px;font-size:24px;font-weight:400;color:#fff;letter-spacing:0.400px">registered</div>
<div class="t" style="left:150.0px;top:1831.80px;font-size:28px;font-weight:400;color:#1c1d21;letter-spacing:0.500px">mighty_peak_2559</div>
<div class="t" style="left:1103.9px;top:1831.80px;font-size:28px;font-weight:400;color:#1c1d21;letter-spacing:0.900px">2/26/24 04:27 PM</div>
<div class="t" style="left:1405.0px;top:1831.80px;font-size:28px;font-weight:400;color:#1c1d21;letter-spacing:0.250px">train.py</div>
<div class="t" style="left:1604.5px;top:1831.80px;font-size:28px;font-weight:400;color:#1c1d21;letter-spacing:0.250px">00:02:48</div>
<div class="t" style="left:1810.0px;top:1831.80px;font-size:28px;font-weight:400;color:#1c1d21;letter-spacing:0.950px">rodrigom</div>
<div class="t" style="left:2010.0px;top:1831.80px;font-size:28px;font-weight:400;color:#1c1d21;letter-spacing:0.750px">32</div>
<div class="t" style="left:2210.0px;top:1831.80px;font-size:28px;font-weight:400;color:#1c1d21;letter-spacing:0.750px">0.95</div>
<div class="t" style="left:2452.0px;top:1831.80px;font-size:28px;font-weight:400;color:#1c1d21;letter-spacing:0.750px">2.114</div>
<div class="t" style="left:2700.0px;top:1831.80px;font-size:28px;font-weight:400;color:#1c1d21;letter-spacing:0.750px">0.284</div>
<div class="t" style="left:3000.0px;top:1831.80px;font-size:28px;font-weight:400;color:#1c1d21;letter-spacing:0.750px">0.351</div>
<div class="t" style="left:3200.0px;top:1831.80px;font-size:28px;font-weight:400;color:#1c1d21;letter-spacing:0.750px">0.275</div>
<div class="t" style="left:3454.0px;top:1831.80px;font-size:28px;font-weight:400;color:#1c1d21;letter-spacing:0.750px">2.126</div>
<div class="t" style="left:3746.0px;top:1831.80px;font-size:28px;font-weight:400;color:#1c1d21;letter-spacing:0.750px">0.35</div>
<div class="t" style="left:733.7px;top:1833.68px;font-size:24px;font-weight:400;color:#fff;letter-spacing:0.400px">registered</div>
<div class="t" style="left:150.0px;top:1933.80px;font-size:28px;font-weight:400;color:#1c1d21;letter-spacing:0.500px">renewed_trellis_1301</div>
<div class="t" style="left:1103.9px;top:1933.80px;font-size:28px;font-weight:400;color:#1c1d21;letter-spacing:0.900px">2/26/24 04:23 PM</div>
<div class="t" style="left:1405.0px;top:1933.80px;font-size:28px;font-weight:400;color:#1c1d21;letter-spacing:0.250px">train.py</div>
<div class="t" style="left:1604.5px;top:1933.80px;font-size:28px;font-weight:400;color:#1c1d21;letter-spacing:0.250px">00:02:48</div>
<div class="t" style="left:1810.0px;top:1933.80px;font-size:28px;font-weight:400;color:#1c1d21;letter-spacing:0.950px">rodrigom</div>
<div class="t" style="left:2010.0px;top:1933.80px;font-size:28px;font-weight:400;color:#1c1d21;letter-spacing:0.750px">32</div>
<div class="t" style="left:2210.0px;top:1933.80px;font-size:28px;font-weight:400;color:#1c1d21;letter-spacing:0.750px">0.95</div>
<div class="t" style="left:2451.0px;top:1933.80px;font-size:28px;font-weight:400;color:#1c1d21;letter-spacing:0.750px">1.717</div>
<div class="t" style="left:2700.0px;top:1933.80px;font-size:28px;font-weight:400;color:#1c1d21;letter-spacing:0.750px">0.386</div>
<div class="t" style="left:3000.0px;top:1933.80px;font-size:28px;font-weight:400;color:#1c1d21;letter-spacing:0.750px">0.377</div>
<div class="t" style="left:3200.0px;top:1933.80px;font-size:28px;font-weight:400;color:#1c1d21;letter-spacing:0.750px">0.387</div>
<div class="t" style="left:3453.0px;top:1933.80px;font-size:28px;font-weight:400;color:#1c1d21;letter-spacing:0.750px">1.703</div>
<div class="t" style="left:3746.0px;top:1933.80px;font-size:28px;font-weight:400;color:#1c1d21;letter-spacing:0.750px">0.38</div>
<div class="t" style="left:733.7px;top:1935.68px;font-size:24px;font-weight:400;color:#fff;letter-spacing:0.400px">registered</div>
<div class="t" style="left:150.0px;top:2035.80px;font-size:28px;font-weight:400;color:#1c1d21;letter-spacing:0.500px">equal_singularity_5166</div>
<div class="t" style="left:1103.9px;top:2035.80px;font-size:28px;font-weight:400;color:#1c1d21;letter-spacing:0.900px">2/26/24 04:15 PM</div>
<div class="t" style="left:1405.0px;top:2035.80px;font-size:28px;font-weight:400;color:#1c1d21;letter-spacing:0.250px">train.py</div>
<div class="t" style="left:1604.5px;top:2035.80px;font-size:28px;font-weight:400;color:#1c1d21;letter-spacing:0.250px">00:02:12</div>
<div class="t" style="left:1810.0px;top:2035.80px;font-size:28px;font-weight:400;color:#1c1d21;letter-spacing:0.950px">rodrigom</div>
<div class="t" style="left:2009.0px;top:2035.80px;font-size:28px;font-weight:400;color:#1c1d21;letter-spacing:0.750px">16</div>
<div class="t" style="left:2210.0px;top:2035.80px;font-size:28px;font-weight:400;color:#1c1d21;letter-spacing:0.750px">0.95</div>
<div class="t" style="left:2451.0px;top:2035.80px;font-size:28px;font-weight:400;color:#1c1d21;letter-spacing:0.750px">1.681</div>
<div class="t" style="left:2700.0px;top:2035.80px;font-size:28px;font-weight:400;color:#1c1d21;letter-spacing:0.750px">0.455</div>
<div class="t" style="left:3000.0px;top:2035.80px;font-size:28px;font-weight:400;color:#1c1d21;letter-spacing:0.750px">0.366</div>
<div class="t" style="left:3200.0px;top:2035.80px;font-size:28px;font-weight:400;color:#1c1d21;letter-spacing:0.750px">0.46</div>
<div class="t" style="left:3453.0px;top:2035.80px;font-size:28px;font-weight:400;color:#1c1d21;letter-spacing:0.750px">1.654</div>
<div class="t" style="left:3746.0px;top:2035.80px;font-size:28px;font-weight:400;color:#1c1d21;letter-spacing:0.750px">0.366</div>
<div class="t" style="left:733.7px;top:2037.68px;font-size:24px;font-weight:400;color:#fff;letter-spacing:0.400px">registered</div>
<div class="t" style="left:405.0px;top:255.07px;font-size:20px;font-weight:400;color:#5b6478;letter-spacing:0.000px">1</div>
<div class="t" style="left:571.0px;top:255.07px;font-size:20px;font-weight:400;color:#5b6478;letter-spacing:0.000px">2</div>
<div class="t" style="left:794.0px;top:255.07px;font-size:20px;font-weight:400;color:#5b6478;letter-spacing:0.000px">15</div>
</div>

<!-- table clip mask: footer -->
<div class="a" style="left:0;top:2073px;width:700px;height:85px;background:#fff"></div>
<div class="a" style="left:702px;top:2073px;width:3138px;height:85px;background:#fff"></div>
<div class="a" style="left:0;top:2157px;width:3840px;height:3px;background:#e4e5e9"></div>
<!-- horizontal scrollbar -->
<div class="a" style="left:0;top:2065px;width:3544px;height:8px;background:rgba(128,128,128,0.5)"></div>
<!-- vertical scrollbar -->
<div class="a" style="left:3832px;top:450px;width:8px;height:1495px;background:rgba(128,128,128,0.5)"></div>

<div style="position:absolute;left:0;top:2073px;width:3840px;height:87px;will-change:transform"><div style="position:absolute;left:0;top:-2073px">
<div class="t" style="left:184.0px;top:2101.34px;font-size:25px;font-weight:400;color:#5b6478;letter-spacing:-0.332px">Showing</div>
<div class="t" style="left:287.0px;top:2101.34px;font-size:25px;font-weight:400;color:#5155f5;letter-spacing:-0.711px">1-16</div>
<div class="t" style="left:391.0px;top:2101.34px;font-size:25px;font-weight:400;color:#5b6478;letter-spacing:0.325px">of 16</div>
</div></div>
<!-- pagination icons -->
<svg style="left:53px;top:2105.5px" width="24" height="22" viewBox="0 0 24 22">
  <path d="M2.5 1 L2.5 19" stroke="#adb3c2" stroke-width="2.2"/><path d="M19.5 2 L11.5 10.5 L19.5 19" stroke="#adb3c2" stroke-width="2.2" fill="none"/>
</svg>
<svg style="left:121px;top:2105.5px" width="16" height="22" viewBox="0 0 16 22">
  <path d="M11 2 L3 10.5 L11 19" stroke="#adb3c2" stroke-width="2.2" fill="none"/>
</svg>
<svg style="left:353px;top:2107px" width="20" height="12" viewBox="0 0 20 12"><path d="M1 1 L19 1 L10 10 Z" fill="#5155f5"/></svg>
<svg style="left:497px;top:2105.5px" width="16" height="22" viewBox="0 0 16 22">
  <path d="M3 2 L11 10.5 L3 19" stroke="#adb3c2" stroke-width="2.2" fill="none"/>
</svg>
<svg style="left:557px;top:2105.5px" width="24" height="22" viewBox="0 0 24 22">
  <path d="M20.5 1 L20.5 19" stroke="#adb3c2" stroke-width="2.2"/><path d="M3.5 2 L11.5 10.5 L3.5 19" stroke="#adb3c2" stroke-width="2.2" fill="none"/>
</svg>
</body></html>
